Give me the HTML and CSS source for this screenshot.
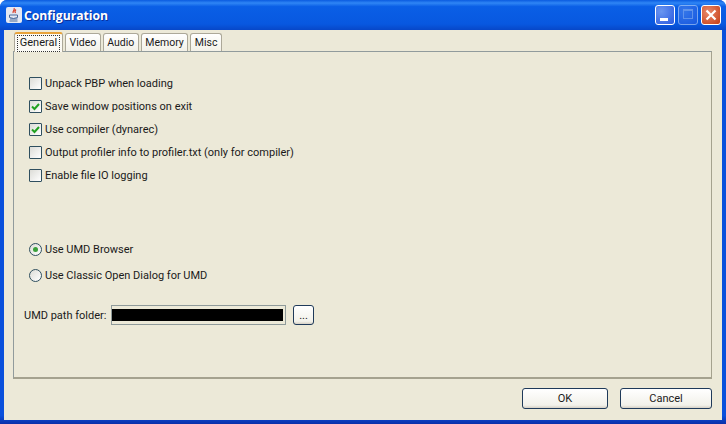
FILE: index.html
```html
<!DOCTYPE html>
<html lang="en">
<head>
    <meta charset="UTF-8">
    <title>Configuration</title>
    <link rel="stylesheet" href="styles.css">
</head>
<body>
    <div class="window">
        <div class="title-bar">
            <svg class="java-icon" width="16" height="16" viewBox="0 0 16 16">
                <rect width="16" height="16" rx="2" fill="#e4e8f2"/>
                <path d="M8 1c1.500 2-2 3-.8 5M10 2.500c-1.500 1.200-1.500 2-.5 3.500" fill="none" stroke="#d8402a" stroke-width="1.200"/>
                <path d="M3.500 8h8v2.500q-4 2-8 0zM4 12h7.500M3.500 14h8" fill="none" stroke="#4a6a9a" stroke-width="1"/>
            </svg>
            <span class="title-text">Configuration</span>
            <div class="window-buttons">
                <div class="win-btn win-min"><span class="min-bar"></span></div>
                <div class="win-btn win-max"><span class="max-box"></span></div>
                <div class="win-btn win-close">
                    <svg width="20" height="20" viewBox="0 0 20 20">
                        <path d="M5.500 5.500l9 9M14.500 5.500l-9 9" stroke="#fff" stroke-width="2.200" fill="none"/>
                    </svg>
                </div>
            </div>
        </div>

        <div class="client">
            <div class="tabs">
                <div class="tab tab-active"><span class="tab-label">General</span></div>
                <div class="tab">Video</div>
                <div class="tab">Audio</div>
                <div class="tab">Memory</div>
                <div class="tab">Misc</div>
            </div>

            <div class="panel">
                <div class="check-list">
                    <div class="option"><span class="check"></span>Unpack PBP when loading</div>
                    <div class="option"><span class="check"><svg width="11" height="11" viewBox="0 0 11 11"><path d="M2 5.500l2.500 2.500 4.500-5" fill="none" stroke="#21a121" stroke-width="2"/></svg></span>Save window positions on exit</div>
                    <div class="option"><span class="check"><svg width="11" height="11" viewBox="0 0 11 11"><path d="M2 5.500l2.500 2.500 4.500-5" fill="none" stroke="#21a121" stroke-width="2"/></svg></span>Use compiler (dynarec)</div>
                    <div class="option"><span class="check"></span>Output profiler info to profiler.txt (only for compiler)</div>
                    <div class="option"><span class="check"></span>Enable file IO logging</div>
                </div>

                <div class="radio-list">
                    <div class="option"><span class="radio radio-on"></span>Use UMD Browser</div>
                    <div class="option"><span class="radio"></span>Use Classic Open Dialog for UMD</div>
                </div>

                <div class="path-row">
                    <span class="path-label">UMD path folder:</span>
                    <div class="path-field"><div class="path-value"></div></div>
                    <div class="button browse-btn">...</div>
                </div>
            </div>

            <div class="footer">
                <div class="button ok-btn">OK</div>
                <div class="button cancel-btn">Cancel</div>
            </div>
        </div>
    </div>
</body>
</html>
```

FILE: styles.css
```css
html, body {
    margin: 0;
    padding: 0;
}
body {
    width: 726px;
    height: 424px;
    overflow: hidden;
    font-family: Roboto, Arial, sans-serif;
    font-size: 11px;
    color: #1a1a1a;
}
.window {
    width: 726px;
    height: 424px;
    display: flex;
    flex-direction: column;
    background: linear-gradient(to bottom, #0a50dc 0%, #0a50dc 98%, #0a2fa8 100%);
    border-radius: 7px 7px 0 0;
}
.title-bar {
    height: 30px;
    display: flex;
    align-items: center;
    padding: 0 5px 0 6px;
    background: linear-gradient(to bottom, #0a5be0 0%, #2f86f5 10%, #0a5fe6 22%, #0858e0 80%, #0747c8 100%);
    border-radius: 7px 7px 0 0;
}
.java-icon {
    margin-right: 2px;
}
.title-text {
    color: #fff;
    font-family: "Open Sans", Arial, sans-serif;
    font-weight: 700;
    font-size: 12.200px;
    text-shadow: 1px 1px 0 #0a2f9a;
}
.window-buttons {
    margin-left: auto;
    display: flex;
    gap: 3px;
}
.win-btn {
    width: 20px;
    height: 20px;
    box-sizing: border-box;
    border: 1px solid #fff;
    border-radius: 3px;
    background: radial-gradient(circle at 30% 30%, #6a96f0, #2a5ae0);
    position: relative;
    display: flex;
}
.win-max {
    opacity: 0.45;
}
.win-close {
    background: radial-gradient(circle at 35% 35%, #e98a6c, #c63d14);
}
.win-close svg {
    margin: -1px;
}
.min-bar {
    width: 8px;
    height: 3px;
    background: #fff;
    margin: 12px 0 0 4px;
}
.max-box {
    width: 10px;
    height: 10px;
    box-sizing: border-box;
    border: 1px solid #c8d6f5;
    border-top-width: 2px;
    margin: 3px 0 0 4px;
}
.client {
    flex: 1;
    margin: 0 4px 4px 4px;
    background: #ece9d8;
    display: flex;
    flex-direction: column;
    padding: 1px 10px 0 9px;
}
.tabs {
    display: flex;
    padding-left: 1px;
    height: 20px;
    gap: 2px;
    align-items: flex-end;
    position: relative;
    font-size: 10.500px;
}
.tab {
    height: 18px;
    line-height: 18px;
    padding: 0 3.500px;
    box-sizing: border-box;
    background: linear-gradient(to bottom, #fff, #f3f1e8);
    border: 1px solid #aca899;
    border-bottom: 0;
    border-radius: 3px 3px 0 0;
}
.tab-active {
    width: 49px;
    height: 20px;
    line-height: 17px;
    padding: 1px 2px 0;
    background: #fbfaf5;
    border-top: 2px solid #e8a33a;
    position: relative;
    top: 1px;
    font-size: 11px;
}
.tab-label {
    display: block;
    height: 15px;
    line-height: 13px;
    text-align: center;
    border: 1px dotted #333;
}
.panel {
    height: 328px;
    box-sizing: border-box;
    border: 1px solid #919b9c;
    border-right-color: #a5a28f;
    border-bottom: 2px solid #a5a28f;
    background: #ece9d8;
    padding: 0 0 0 15px;
}
.check-list {
    margin-top: 20px;
}
.option {
    height: 23px;
    display: flex;
    align-items: center;
    white-space: nowrap;
}
.check {
    width: 13px;
    height: 13px;
    box-sizing: border-box;
    border: 1px solid #2f4f5f;
    border-radius: 1px;
    background: linear-gradient(135deg, #dcdcd7, #fff);
    margin-right: 3px;
    display: flex;
    align-items: center;
    justify-content: center;
}
.radio-list {
    margin-top: 49px;
}
.radio-list .option {
    height: 26px;
}
.radio {
    width: 13px;
    height: 13px;
    box-sizing: border-box;
    border: 1px solid #2f4f5f;
    border-radius: 50%;
    background: linear-gradient(135deg, #dcdcd7, #fff);
    margin-right: 3px;
    display: flex;
    align-items: center;
    justify-content: center;
}
.radio-on::after {
    content: "";
    width: 5px;
    height: 5px;
    border-radius: 50%;
    background: #3aa03a;
}
.path-row {
    display: flex;
    align-items: center;
    margin-top: 17px;
    margin-left: -5px;
}
.path-label {
    width: 87px;
    white-space: nowrap;
}
.path-field {
    width: 175px;
    height: 20px;
    box-sizing: border-box;
    border: 1px solid #8f9a9a;
    background: #ece9d8;
    padding: 3px 2px 3px 0;
    margin-right: 7px;
}
.path-value {
    height: 12px;
    background: #000;
}
.button {
    box-sizing: border-box;
    border: 1px solid #1f3a5a;
    border-radius: 3px;
    background: linear-gradient(to bottom, #fff, #f2f1ea 85%, #d6d0c5);
    display: flex;
    align-items: center;
    justify-content: center;
}
.browse-btn {
    width: 21px;
    height: 20px;
}
.footer {
    display: flex;
    justify-content: flex-end;
    gap: 12px;
    margin-top: 9px;
}
.ok-btn {
    width: 86px;
    height: 21px;
}
.cancel-btn {
    width: 92px;
    height: 21px;
}
```
